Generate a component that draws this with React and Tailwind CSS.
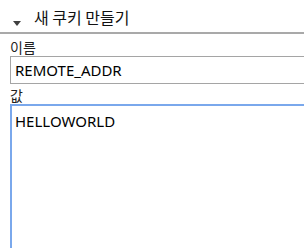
export default function App() {
  const font = { fontFamily: '"Noto Sans", "Noto Sans CJK KR", sans-serif' }
  const kr = { fontFamily: '"Noto Sans CJK KR", sans-serif' }
  return (
    <div className="w-[304px] h-[248px] overflow-hidden bg-white text-black" style={font}>
      {/* header */}
      <div className="h-[34px] flex items-center border-b-2 border-[#a9a9a9]">
        <svg width="8" height="5" viewBox="0 0 8 5" className="ml-[13px] mt-[15px]">
          <path d="M0 0 L8 0 L4 5 Z" fill="#404040" />
        </svg>
        <span className="ml-[13px] text-[16px] leading-none mt-[2px] text-[#111]" style={kr}>
          새 쿠키 만들기
        </span>
      </div>

      <div className="pl-[10px] w-[330px]">
        <div className="h-[22px] flex items-end text-[14px] leading-none pb-[2px] text-[#222]" style={kr}>
          이름
        </div>
        <div className="h-[28px] border border-[#a5a5a5] flex items-center pl-[4px] text-[15px]">
          REMOTE_ADDR
        </div>
        <div className="h-[20px] flex items-end text-[14px] leading-none pb-[2px] text-[#222]" style={kr}>
          값
        </div>
        <div className="h-[160px] border-2 border-[#7aa8ec] pl-[3px] pt-[5px] text-[15px] leading-[20px]">
          HELLOWORLD
        </div>
      </div>
    </div>
  )
}
